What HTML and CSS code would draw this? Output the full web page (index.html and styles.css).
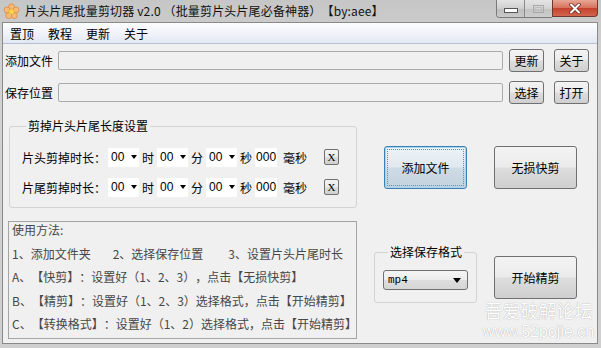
FILE: index.html
```html
<!DOCTYPE html>
<html lang="zh-CN">
<head>
  <meta charset="UTF-8">
  <title>片头片尾批量剪切器 v2.0</title>
  <link rel="stylesheet" href="styles.css">
</head>
<body>
  <div class="window">
    <div class="titlebar">
      <svg class="app-icon" viewBox="0 0 17 17">
        <g fill="#f7b978" stroke="#d98b45" stroke-width="0.8">
          <circle cx="8.5" cy="3.8" r="3"/>
          <circle cx="13" cy="7" r="3"/>
          <circle cx="11.3" cy="12.6" r="3"/>
          <circle cx="5.7" cy="12.6" r="3"/>
          <circle cx="4" cy="7" r="3"/>
        </g>
        <circle cx="8.5" cy="8.7" r="2.8" fill="#f8d54c" stroke="#e0a030" stroke-width="0.6"/>
      </svg>
      <span class="title">片头片尾批量剪切器 v2.0 （批量剪片头片尾必备神器）【by:aee】</span>
      <div class="caption">
        <div class="cap-group">
          <span class="cap cap-min">
            <svg viewBox="0 0 14 6" width="14" height="6"><rect x="0.5" y="0.5" width="13" height="4" fill="#fff" stroke="#555"/></svg>
          </span>
          <span class="cap cap-max">
            <svg viewBox="0 0 11 8" width="11" height="8"><rect x="0.5" y="0.5" width="10" height="7" fill="none" stroke="#a9a9a9"/><rect x="2.5" y="2.5" width="6" height="3" fill="none" stroke="#bdbdbd"/></svg>
          </span>
        </div>
        <span class="cap cap-close">
          <svg viewBox="0 0 14 11" width="14" height="11">
            <path d="M3 1.5 L11 9.5 M11 1.5 L3 9.5" stroke="#6a2a1e" stroke-width="3.6" stroke-linecap="round"/>
            <path d="M3 1.5 L11 9.5 M11 1.5 L3 9.5" stroke="#fff" stroke-width="2" stroke-linecap="round"/>
          </svg>
        </span>
      </div>
    </div>

    <div class="client">
      <div class="menubar">
        <span>置顶</span>
        <span>教程</span>
        <span>更新</span>
        <span>关于</span>
      </div>

      <div class="path-row">
        <label>添加文件</label>
        <div class="path-input"></div>
        <button class="btn btn-small">更新</button>
        <button class="btn btn-small">关于</button>
      </div>
      <div class="path-row second">
        <label>保存位置</label>
        <div class="path-input"></div>
        <button class="btn btn-small">选择</button>
        <button class="btn btn-small">打开</button>
      </div>

      <div class="lower">
        <div class="left-col">
          <fieldset class="group cut">
            <legend>剪掉片头片尾长度设置</legend>
            <div class="time-row">
              <span class="time-label">片头剪掉时长：</span>
              <span class="combo">00</span><span class="unit">时</span>
              <span class="combo">00</span><span class="unit">分</span>
              <span class="combo">00</span><span class="unit">秒</span>
              <span class="ms-box">000</span>
              <span class="ms-label">毫秒</span>
              <button class="btn clear-btn">X</button>
            </div>
            <div class="time-row">
              <span class="time-label">片尾剪掉时长：</span>
              <span class="combo">00</span><span class="unit">时</span>
              <span class="combo">00</span><span class="unit">分</span>
              <span class="combo">00</span><span class="unit">秒</span>
              <span class="ms-box">000</span>
              <span class="ms-label">毫秒</span>
              <button class="btn clear-btn">X</button>
            </div>
          </fieldset>

          <div class="usage">
            <div class="usage-text">
              <div>使用方法:</div>
              <div>1、添加文件夹<span class="step">2、选择保存位置</span><span class="step">3、设置片头片尾时长</span></div>
              <div>A、【快剪】：设置好（1、2、3），点击【无损快剪】</div>
              <div>B、【精剪】：设置好（1、2、3）选择格式，点击【开始精剪】</div>
              <div>C、【转换格式】：设置好（1、2）选择格式，点击【开始精剪】</div>
            </div>
          </div>
        </div>

        <div class="right-col">
          <div class="action-row">
            <button class="btn btn-big btn-default"><span class="focus-ring">添加文件</span></button>
            <button class="btn btn-big">无损快剪</button>
          </div>
          <div class="format-row">
            <fieldset class="group format">
              <legend>选择保存格式</legend>
              <div class="select">mp4</div>
            </fieldset>
            <button class="btn btn-big">开始精剪</button>
          </div>
        </div>
      </div>
    </div>

    <div class="watermark">
      <div class="wm-cn">吾爱破解论坛</div>
      <div class="wm-url">www.52pojie.cn</div>
    </div>
  </div>
</body>
</html>
```

FILE: styles.css
```css
body {
  margin: 0;
  font-family: "Noto Sans CJK SC", "Microsoft YaHei", sans-serif;
  font-size: 12px;
  color: #000;
  text-spacing-trim: space-all;
}

.window {
  position: relative;
  width: 601px;
  height: 348px;
  display: flex;
  flex-direction: column;
  background: linear-gradient(#c6c6c6, #d2d2d2 60px, #cfcfcf);
  overflow: hidden;
}

/* title bar */
.titlebar {
  height: 22px;
  flex-shrink: 0;
  display: flex;
  align-items: center;
}

.app-icon {
  width: 17px;
  height: 17px;
  margin: 0 5px 0 3px;
}

.title {
  flex: 1;
  line-height: 22px;
  letter-spacing: 0.15px;
  color: #111;
  white-space: nowrap;
}

.caption {
  align-self: flex-start;
  display: flex;
  margin-right: 3px;
}

.cap-group {
  display: flex;
  border: 1px solid #7b7b7b;
  border-top: none;
  border-right: none;
  border-radius: 0 0 0 4px;
  overflow: hidden;
}

.cap {
  height: 17px;
  display: flex;
  align-items: center;
  justify-content: center;
  box-sizing: border-box;
}

.cap-min {
  width: 28px;
  padding-top: 5px;
  background: linear-gradient(#e4e4e4, #cfcfcf 50%, #bdbdbd 51%, #c9c9c9);
  border-right: 1px solid #8a8a8a;
}

.cap-max {
  width: 27px;
  background: linear-gradient(#e4e4e4, #d3d3d3 50%, #c3c3c3 51%, #cdcdcd);
}

.cap-close {
  width: 46px;
  border: 1px solid #6e3a30;
  border-top: none;
  border-radius: 0 0 4px 0;
  background: linear-gradient(#e8a796, #d7705b 50%, #c4412c 51%, #d2654f);
}

/* client area */
.client {
  flex: 1;
  margin: 0 3px 4px 2px;
  border: 1px solid #8a8a8a;
  background: #f0f0f0;
  display: flex;
  flex-direction: column;
}

.menubar {
  height: 20px;
  flex-shrink: 0;
  display: flex;
  align-items: center;
  gap: 14px;
  padding-left: 7px;
  background: linear-gradient(#fdfdfe, #eef1f8 60%, #e2e7f2);
  border-bottom: 1px solid #b7c0d1;
}

.path-row {
  display: flex;
  align-items: center;
  height: 23px;
  margin-top: 5px;
  padding: 0 8px 0 2px;
}

.path-row.second {
  margin-top: 9px;
}

.path-row label {
  width: 53px;
}

.path-input {
  flex: 1;
  height: 19px;
  box-sizing: border-box;
  border: 1px solid #ababab;
  border-radius: 2px;
  background: #f0f0f0;
  margin-right: 6px;
}

.btn {
  box-sizing: border-box;
  padding: 0;
  border: 1px solid #707070;
  border-radius: 3px;
  background: linear-gradient(#f3f3f3, #ebebeb 48%, #dddddd 52%, #cfcfcf);
  font-family: inherit;
  font-size: 12px;
  color: #000;
}

.btn-small {
  width: 35px;
  height: 23px;
}

.btn-small + .btn-small {
  margin-left: 10px;
}

/* lower part */
.lower {
  display: flex;
}

.left-col {
  width: 348px;
  margin-left: 6px;
  display: flex;
  flex-direction: column;
}

.group {
  margin: 0;
  padding: 0;
  min-width: 0;
  border: 1px solid #d3d3d3;
  border-radius: 3px;
}

.group legend {
  padding: 0 2px;
  margin-left: 4px;
  line-height: 16px;
}

.cut {
  margin-top: 14px;
  padding: 13px 0 10px 12px;
}

.time-row {
  display: flex;
  align-items: center;
  height: 20px;
}

.time-row + .time-row {
  margin-top: 10px;
}

.time-label {
  width: 86px;
}

.combo {
  width: 31px;
  height: 19px;
  box-sizing: border-box;
  padding: 0 2px 0 3px;
  background: #fff;
  display: flex;
  align-items: center;
  justify-content: space-between;
  font-family: "Liberation Sans", sans-serif;
  font-size: 12px;
}

.combo::after {
  content: "";
  border-left: 3.5px solid transparent;
  border-right: 3.5px solid transparent;
  border-top: 4px solid #000;
}

.unit {
  margin: 0 3px;
}

.ms-box {
  width: 22px;
  height: 19px;
  line-height: 19px;
  text-align: center;
  background: #fff;
  font-family: "Liberation Sans", sans-serif;
}

.ms-label {
  margin-left: 6px;
}

.clear-btn {
  width: 15px;
  height: 16px;
  margin-left: 17px;
  border-radius: 2px;
  font-family: "Liberation Serif", serif;
  font-size: 11px;
  line-height: 14px;
}

.usage {
  margin: 13px 0 0 -1px;
  width: 349px;
  height: 118px;
  box-sizing: border-box;
  border: 1px solid #a5a5a5;
  background: #f0f0f0;
  padding-left: 3px;
  color: #474747;
  overflow: hidden;
}

.usage-text {
  margin-top: -4px;
  line-height: 23.5px;
  white-space: nowrap;
}

.step {
  margin-left: 22px;
}

.step + .step {
  margin-left: 25px;
}

.right-col {
  display: flex;
  flex-direction: column;
}

.action-row {
  display: flex;
  gap: 27px;
  margin-top: 42px;
  padding-left: 27px;
}

.btn-big {
  width: 83px;
  height: 43px;
}

.btn-default {
  border-color: #3c7fb1;
  background: linear-gradient(#eef4f8, #e0e9ef 48%, #cddbe5 52%, #c2d3df);
  box-shadow: inset 0 0 0 1px #a9d4ee;
  padding: 2px;
}

.focus-ring {
  display: flex;
  height: 100%;
  align-items: center;
  justify-content: center;
  box-sizing: border-box;
  border: 1px dotted #5d8fb4;
}

.format-row {
  display: flex;
  align-items: flex-start;
  margin-top: 55px;
}

.format {
  width: 103px;
  margin-left: 17px;
  box-sizing: border-box;
  padding: 10px 0 12px 8px;
}

.format legend {
  margin-left: 5px;
}

.select {
  width: 85px;
  height: 20px;
  box-sizing: border-box;
  border: 1px solid #707070;
  border-radius: 3px;
  background: linear-gradient(#f5f5f5, #ececec 50%, #dedede 51%, #d6d6d6);
  display: flex;
  align-items: center;
  justify-content: space-between;
  padding: 0 6px 0 4px;
  font-family: "Liberation Mono", monospace;
  font-size: 11px;
}

.select::after {
  content: "";
  border-left: 4px solid transparent;
  border-right: 4px solid transparent;
  border-top: 5px solid #000;
}

.format-row .btn-big {
  margin: 12px 0 0 17px;
}

/* watermark */
.watermark {
  position: absolute;
  left: 482px;
  top: 300px;
  width: 113px;
  text-align: center;
  color: #fff;
  text-shadow: 0 0 1px rgba(0, 0, 0, 0.25), 0 0 1px rgba(0, 0, 0, 0.15);
}

.wm-cn {
  font-size: 18px;
  line-height: 20px;
}

.wm-url {
  margin-top: 4px;
  font-family: "Liberation Sans", sans-serif;
  font-size: 16px;
  line-height: 16px;
}
```
